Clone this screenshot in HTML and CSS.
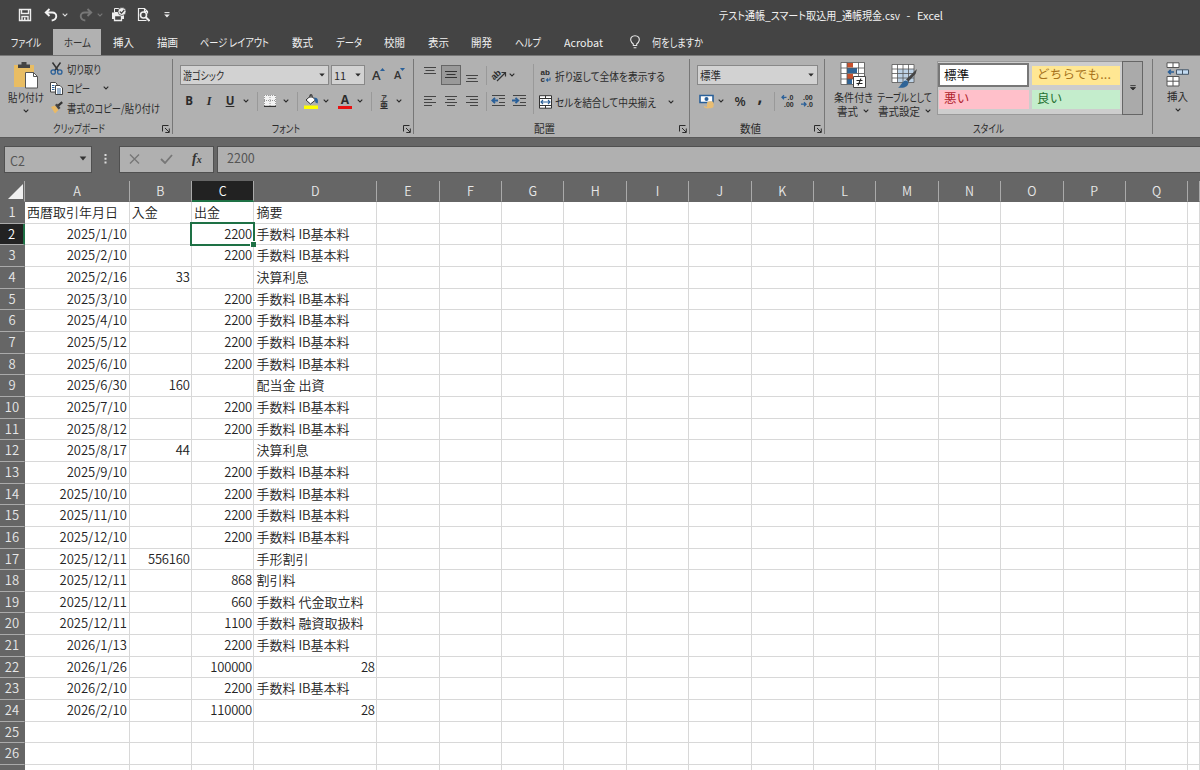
FILE: index.html
```html
<!DOCTYPE html>
<html lang="ja">
<head>
<meta charset="utf-8">
<title>テスト通帳_スマート取込用_通帳現金.csv - Excel</title>
<link rel="stylesheet" href="styles.css">
</head>
<body>
<svg class="defs" width="0" height="0">
  <symbol id="chev" viewBox="0 0 6 4"><path d="M.7.7 3 3 5.3.7" fill="none" stroke="currentColor" stroke-width="1.1"/></symbol>
  <symbol id="tri" viewBox="0 0 6 4"><path d="M.3.4h5.4L3 3.6z" fill="currentColor"/></symbol>
  <symbol id="launch" viewBox="0 0 8 8"><path d="M.5 6.500V.5h6M3 3l4 4M7.300 3.500v4h-4" fill="none" stroke="currentColor"/></symbol>
</svg>

<header class="titlebar">
  <div class="quick">
    <svg width="14" height="14" viewBox="0 0 14 14"><path d="M1.500 1.500h11v11h-11zM3.500 1.500v4h7v-4M4 12.500v-4h6v4" fill="none" stroke="#eee" stroke-width="1.400"/><path d="M6 9.500h1.500v3H6z" fill="#eee"/></svg>
    <svg width="14" height="14" viewBox="0 0 14 14"><path d="M5.500 1 1.800 4.500 5.500 8M2 4.500h6.200c5.500 0 5.500 7.300-.5 8" fill="none" stroke="#f2f2f2" stroke-width="1.900"/></svg>
    <svg class="c1" width="6" height="4"><use href="#chev"/></svg>
    <svg class="dim" width="14" height="14" viewBox="0 0 14 14"><path d="m8.500 1 3.700 3.500L8.500 8M12 4.500H5.800c-5.500 0-5.500 7.300.5 8" fill="none" stroke="currentColor" stroke-width="1.900"/></svg>
    <svg class="c1 dim" width="6" height="4"><use href="#chev"/></svg>
    <svg class="printer" width="16" height="15" viewBox="0 0 16 15"><path d="M1 5.500h12V12H1z" fill="#eee"/><path d="M3.500 8.500h7v5h-7z" fill="#444" stroke="#eee" stroke-width="1.300"/><path d="M3.500 1.500h5v4h-5z" fill="#444" stroke="#eee"/><circle cx="11" cy="4.500" r="4" fill="#eee" stroke="#444" stroke-width=".7"/><path d="m8.800 4.500 1.700 1.700L13.300 3" fill="none" stroke="#444" stroke-width="1.200"/></svg>
    <svg width="13" height="15" viewBox="0 0 13 15"><path d="M9.500 13.500h-8v-12h6l3 3v2M7.500 1.500v3h3" fill="none" stroke="#eee" stroke-width="1.200"/><circle cx="6.500" cy="8" r="3" fill="none" stroke="#eee" stroke-width="1.600"/><path d="m8.500 10 4 4" stroke="#eee" stroke-width="2"/></svg>
    <svg class="more" width="6" height="6" viewBox="0 0 6 6"><path d="M.5.6h5" stroke="#eee"/><path d="M.2 2.600h5.600L3 5.600z" fill="#eee"/></svg>
  </div>
  <div class="doc"><span class="fit" data-w="181">テスト通帳_スマート取込用_通帳現金.csv</span><span>-</span><span class="fit" data-w="26">Excel</span></div>
</header>

<nav class="tabs">
  <a class="tab file"><span class="fit" data-w="30">ファイル</span></a>
  <a class="tab active"><span class="fit" data-w="27">ホーム</span></a>
  <a class="tab"><span class="fit" data-w="21">挿入</span></a>
  <a class="tab"><span class="fit" data-w="21">描画</span></a>
  <a class="tab"><span class="fit" data-w="69">ページ レイアウト</span></a>
  <a class="tab"><span class="fit" data-w="21">数式</span></a>
  <a class="tab"><span class="fit" data-w="26">データ</span></a>
  <a class="tab"><span class="fit" data-w="21">校閲</span></a>
  <a class="tab"><span class="fit" data-w="21">表示</span></a>
  <a class="tab"><span class="fit" data-w="21">開発</span></a>
  <a class="tab"><span class="fit" data-w="26">ヘルプ</span></a>
  <a class="tab"><span class="fit" data-w="39">Acrobat</span></a>
  <a class="tab tell"><svg width="10" height="14" viewBox="0 0 10 14"><path d="M3.300 10.500V9C.3 7 .2 3.800 1.500 2.200 3.200.2 6.800.2 8.500 2.200 9.800 3.800 9.700 7 6.700 9v1.500zM3.600 12.700h2.800" fill="none" stroke="#e6e6e6" stroke-width="1.100"/></svg><span class="fit" data-w="51">何をしますか</span></a>
</nav>

<section class="ribbon">
  <div class="group clipboard">
    <div class="body">
      <div class="big paste">
        <svg width="26" height="27" viewBox="0 0 26 27"><path d="M1 3h20v22H1z" fill="#e9bd63"/><path d="M5 2.500h3.500V0h5v2.500H17V6H5z" fill="#444"/><path d="M12.500 10.500h8l4 4v11.500h-12z" fill="#fff" stroke="#555"/><path d="M20.500 10.500v4h4" fill="none" stroke="#555"/></svg>
        <span class="fit" data-w="36">貼り付け</span>
        <svg width="6" height="4"><use href="#chev"/></svg>
      </div>
      <div class="cliplist">
        <div><svg width="13" height="13" viewBox="0 0 13 13"><path d="m2.500.5 5.700 8M10.500.5l-5.700 8" stroke="#333" stroke-width="1.500"/><circle cx="3.200" cy="10" r="2.200" fill="none" stroke="#2a6099" stroke-width="1.300"/><circle cx="9.800" cy="10" r="2.200" fill="none" stroke="#2a6099" stroke-width="1.300"/></svg><span class="fit" data-w="34">切り取り</span></div>
        <div><svg width="13" height="13" viewBox="0 0 13 13"><path d="M.5.5h5l1.500 1.500v8H.5z" fill="#fff" stroke="#444"/><path d="M2 3.500h2.500M2 5.500h2.500M2 7.500h2.500" stroke="#2a6099"/><path d="M5.500 3.500h4.500l2.500 2.500v6.500h-7z" fill="#fff" stroke="#444"/><path d="M7 7h4M7 9h4M7 11h4" stroke="#2a6099" stroke-width=".9"/></svg><span class="fit" data-w="23">コピー</span><svg class="cc copy" width="6" height="4"><use href="#chev"/></svg></div>
        <div><svg width="13" height="13" viewBox="0 0 13 13"><path d="m1 6 4-1.500 3.500 4.500L5 12.500z" fill="#e9b965"/><path d="m5 4 2-1.500L10.500 7 8.500 8.500z" fill="#444"/><path d="m8.200 4.700 4-3.500" stroke="#333" stroke-width="2.200"/></svg><span class="fit" data-w="93">書式のコピー/貼り付け</span></div>
      </div>
    </div>
    <footer><span class="fit" data-w="52">クリップボード</span><svg width="8" height="8"><use href="#launch"/></svg></footer>
  </div>

  <div class="group font">
    <div class="body rows">
      <div class="line">
        <div class="combo face"><span class="fit" data-w="41">游ゴシック</span><svg width="6" height="4"><use href="#tri"/></svg></div>
        <div class="combo size"><span>11</span><svg width="6" height="4"><use href="#tri"/></svg></div>
        <div class="grow">A<svg width="5" height="3" viewBox="0 0 5 3"><path d="M0 3h5L2.500 0z" fill="#2a6099"/></svg></div>
        <div class="grow small">A<svg width="5" height="3" viewBox="0 0 5 3"><path d="M0 0h5L2.500 3z" fill="#2a6099"/></svg></div>
      </div>
      <div class="strip fontstrip">
        <b>B</b><i>I</i><u>U</u><svg width="6" height="4"><use href="#chev"/></svg>
        <hr>
        <svg width="12" height="12" viewBox="0 0 12 12"><path d="M0 0h12v11H0z" fill="#f4f4f4"/><path d="M0 .5h12M0 5.500h12M.5 0v11M6 0v11M11.500 0v11" stroke="#999" stroke-dasharray="1 1"/><path d="M0 11.400h12" stroke="#333" stroke-width="1.200"/></svg>
        <svg width="6" height="4"><use href="#chev"/></svg>
        <hr>
        <svg width="15" height="15" viewBox="0 0 15 15"><path d="m2 6 5-4.500L11.500 6 6.500 10z" fill="#fff" stroke="#333"/><path d="M6 4V.8h2V4" fill="none" stroke="#333"/><path d="M10 3.500c4 0 4.500 3 3.500 6l-2-1z" fill="#2a6099"/><path d="M0 11.500h14V15H0z" fill="#ff0"/></svg>
        <svg width="6" height="4"><use href="#chev"/></svg>
        <span class="color">A</span>
        <svg width="6" height="4"><use href="#chev"/></svg>
        <hr>
        <span class="ruby"><small>ア</small>亜</span>
        <svg width="6" height="4"><use href="#chev"/></svg>
      </div>
    </div>
    <footer><span class="fit" data-w="28">フォント</span><svg width="8" height="8"><use href="#launch"/></svg></footer>
  </div>

  <div class="group align">
    <div class="body">
      <div class="rows alignleft">
        <div class="strip a1">
          <svg class="up" width="12" height="8" viewBox="0 0 12 8"><path d="M0 .5h12M1.500 3.500h9M0 6.500h12" stroke="#444"/></svg>
          <span class="pressed"><svg width="12" height="8" viewBox="0 0 12 8"><path d="M0 .5h12M1.500 3.500h9M0 6.500h12" stroke="#333"/></svg></span>
          <svg class="down" width="12" height="8" viewBox="0 0 12 8"><path d="M0 .5h12M1.500 3.500h9M0 6.500h12" stroke="#444"/></svg>
          <hr>
          <svg class="open" width="15" height="14" viewBox="0 0 15 14"><text x="-1" y="9" transform="rotate(-42 5 7)" class="ab slant">ab</text><path d="m5 13 8-8M9.500 4.500H13.500V8.500" fill="none" stroke="#333" stroke-width="1.200"/></svg>
          <svg width="6" height="4"><use href="#chev"/></svg>
        </div>
        <div class="strip a2">
          <svg width="12" height="10" viewBox="0 0 12 10"><path d="M0 .5h12M0 3.500h8M0 6.500h12M0 9.500h8" stroke="#444"/></svg>
          <svg width="12" height="10" viewBox="0 0 12 10"><path d="M0 .5h12M2 3.500h8M0 6.500h12M2 9.500h8" stroke="#444"/></svg>
          <svg width="12" height="10" viewBox="0 0 12 10"><path d="M0 .5h12M4 3.500h8M0 6.500h12M4 9.500h8" stroke="#444"/></svg>
          <hr>
          <svg width="15" height="12" viewBox="0 0 15 12"><path d="M1 .5h13M8 3.500h6M8 7.500h6M1 10.500h13" stroke="#444"/><path d="M7 5.500H1.500M4 2.800 1.200 5.500 4 8.200" fill="none" stroke="#2a6099" stroke-width="1.800"/></svg>
          <svg width="15" height="12" viewBox="0 0 15 12"><path d="M1 .5h13M8 3.500h6M8 7.500h6M1 10.500h13" stroke="#444"/><path d="M0 5.500h5.500M3.500 2.800l2.800 2.700-2.800 2.700" fill="none" stroke="#2a6099" stroke-width="1.800"/></svg>
        </div>
      </div>
      <div class="wraps">
        <div><svg class="open" width="13" height="14" viewBox="0 0 13 14"><text x="1.500" y="6.300" class="ab">ab</text><text x="1.500" y="13.300" class="ab">c</text><path d="M11 8.500v2.500H7.500M9 9.500 7.500 11 9 12.500" fill="none" stroke="#2a6099" stroke-width="1.100"/></svg><span class="fit" data-w="110">折り返して全体を表示する</span></div>
        <div><svg width="13" height="14" viewBox="0 0 13 14"><path d="M.5.7h12v12.500H.5z" fill="#fff" stroke="#333"/><path d="M.5 3.500h12M.5 10.500h12M6.500.7v2.800M6.500 10.500v2.700" stroke="#333"/><path d="M2 7h9M4 5 2 7l2 2M9 5l2 2-2 2" fill="none" stroke="#2a6099" stroke-width="1.100"/></svg><span class="fit" data-w="101">セルを結合して中央揃え</span><svg class="cc" width="6" height="4"><use href="#chev"/></svg></div>
      </div>
    </div>
    <footer><span class="fit" data-w="21">配置</span><svg width="8" height="8"><use href="#launch"/></svg></footer>
  </div>

  <div class="group number">
    <div class="body rows">
      <div class="combo general"><span class="fit" data-w="21">標準</span><svg width="6" height="4"><use href="#tri"/></svg></div>
      <div class="strip numstrip">
        <svg width="16" height="15" viewBox="0 0 16 15"><path d="M1 1.500h13v7H1z" fill="#fff" stroke="#2a6099" stroke-width="1.600"/><circle cx="7.500" cy="5" r="2" fill="#2a6099"/><path d="M8 8.500c2-1.500 5-1.500 6.500-.5v5c-2 1.500-4 1.500-6.500.5z" fill="#e8bd74"/><path d="M8 10c2 1 5 1 6.500 0M5 12.500c2 1.500 5 1.500 7 0" fill="none" stroke="#e8bd74" stroke-width="1.500"/></svg>
        <svg width="6" height="4"><use href="#chev"/></svg>
        <span class="pct">%</span><span class="comma">,</span>
        <hr>
        <svg class="open" width="14" height="14" viewBox="0 0 14 14"><text x="6.500" y="6" class="dig">.0</text><text x="3" y="13" class="dig">.00</text><path d="M5.500 3.300H1M3 1.300l-2 2 2 2" fill="none" stroke="#2a6099" stroke-width="1.300"/></svg>
        <svg class="open" width="14" height="14" viewBox="0 0 14 14"><text x="2" y="6" class="dig">.00</text><text x="6" y="13" class="dig">.0</text><path d="M0 10.200h4.500M3 8.200l2 2-2 2" fill="none" stroke="#2a6099" stroke-width="1.300"/></svg>
      </div>
    </div>
    <footer><span class="fit" data-w="21">数値</span><svg width="8" height="8"><use href="#launch"/></svg></footer>
  </div>

  <div class="group styles">
    <div class="body">
      <div class="big cond">
        <svg width="27" height="27" viewBox="0 0 27 27"><path d="M1 .5h23v22H1z" fill="#fff"/><path d="M7 1h6v4.500H7zM7 12h6v5H7z" fill="#c8502c"/><path d="M7 6h10v5H7zM7 17h5v5H7z" fill="#2f6497"/><path d="M1 .5h23.500v22H1zM1 6h23M1 11.500h23M1 17h23M7 .5v22M18.500.5v22" fill="none" stroke="#555" stroke-width=".8"/><path d="M13.500 14.500h12v11h-12z" fill="#fff" stroke="#444"/><path d="M16.500 18.500h6M16.500 21.500h6M21 16.500l-3 7" stroke="#222" stroke-width="1.100"/></svg>
        <span class="fit" data-w="39">条件付き</span>
        <div class="under"><span class="fit" data-w="21">書式</span><svg width="6" height="4"><use href="#chev"/></svg></div>
      </div>
      <div class="big tablefmt">
        <svg width="27" height="27" viewBox="0 0 27 27"><path d="M1 2.500h22v18H1z" fill="#fff"/><path d="M6.500 7H23v13.500H6.500z" fill="#bdd2e6"/><path d="M1 2.500h22v18H1zM1 7h22M1 11.500h22M1 16h22M6.500 2.500v18M12 2.500v18M17.500 2.500v18" fill="none" stroke="#555" stroke-width=".8"/><path d="m26 7-1.500 5-7 7.500-2.500-2z" fill="#444"/><path d="M14.500 18.500c3 0 4 3 1.500 5.500-2.500 2-6 2-9 1.500 3-1 3.500-6 7.500-7z" fill="#2f6497"/></svg>
        <span class="fit" data-w="55">テーブルとして</span>
        <div class="under"><span class="fit" data-w="42">書式設定</span><svg width="6" height="4"><use href="#chev"/></svg></div>
      </div>
      <div class="gallery">
        <div class="swatches">
          <span class="sw normal">標準</span><span class="sw neutral">どちらでも...</span>
          <span class="sw bad">悪い</span><span class="sw good">良い</span>
        </div>
        <div class="expand"><svg width="6" height="6" viewBox="0 0 6 6"><path d="M.3.6h5.400M.5 2.600 3 5l2.500-2.400z" fill="#333" stroke="#333" stroke-width=".9"/></svg></div>
      </div>
    </div>
    <footer><span class="fit" data-w="31">スタイル</span></footer>
  </div>

  <div class="group cells">
    <div class="body">
      <div class="big insert">
        <svg width="24" height="26" viewBox="0 0 24 26"><path d="M1 .8h12v4.700H1zM1 14.500h12v9.500H1zM7 .8v4.700M7 14.500V24M1 19.200h12" fill="#fff" stroke="#555"/><path d="M10.500 7.800h12v4.500h-12zM16.500 7.800v4.500" fill="#c3dbf2" stroke="#456"/><path d="M8 10H2.500M4.800 7.700 2.500 10l2.300 2.300" fill="none" stroke="#2a6099" stroke-width="1.600"/></svg>
        <span class="fit" data-w="21">挿入</span>
        <svg width="6" height="4"><use href="#chev"/></svg>
      </div>
    </div>
  </div>
</section>

<section class="formula">
  <div class="box name"><span>C2</span><svg width="8" height="5" viewBox="0 0 6 4"><use href="#tri"/></svg></div>
  <svg class="dots" width="3" height="11" viewBox="0 0 3 11"><path d="M.5 1h2v2h-2zM.5 4.700h2v2h-2zM.5 8.400h2v2h-2z" fill="#ddd"/></svg>
  <div class="box fx">
    <svg width="11" height="10" viewBox="0 0 11 10"><path d="m1 .5 9 9M10 .5l-9 9" stroke="#777" stroke-width="1.400"/></svg>
    <svg width="13" height="10" viewBox="0 0 13 10"><path d="m1 5 4 4L12 1" fill="none" stroke="#777" stroke-width="1.800"/></svg>
    <span class="fxt">f<small>x</small></span>
  </div>
  <div class="box value">2200</div>
</section>

<main class="sheet" id="sheet"></main>
<script src="sheet.js"></script>
</body>
</html>
```
FILE: styles.css
```css
* { box-sizing: border-box; }
body {
  margin: 0;
  width: 1200px;
  height: 770px;
  overflow: hidden;
  background: #666;
  font: 11px/14px "Noto Sans CJK JP", sans-serif;
  color: #2b2b2b;
}
svg { display: block; flex: none; }
.open { overflow: visible; }
.defs { position: absolute; }
.fit {
  display: inline-block;
  white-space: nowrap;
  transform-origin: 0 50%;
  font-feature-settings: "palt";
}

.titlebar { display: flex; height: 29px; background: #444; color: #f2f2f2; }
.quick { display: flex; align-items: center; width: 719px; padding-left: 18px; }
.quick svg + svg { margin-left: 12px; }
.quick svg.c1 { margin-left: 4px; color: #ddd; }
.quick svg.c1 + svg { margin-left: 11px; }
.quick .dim, .quick svg.c1.dim { color: #777; }
.quick svg.c1 + svg.printer { margin: 0 -2px 0 8px; }
.quick svg.more { margin-left: 14px; }
.doc { display: flex; gap: 6.500px; padding-top: 8px; white-space: pre; }

.tabs { display: flex; height: 26px; background: #444; color: #f0f0f0; }
.tab { display: flex; align-items: center; padding: 0 11.300px; }
.tab.active { background: #b1b1b1; color: #333; padding: 0 10.500px; margin: 0 .7px; }
.tab.tell { gap: 12px; padding-left: 16px; }

.ribbon {
  display: flex;
  height: 83px;
  padding: 3px 0;
  background: #b1b1b1;
  border-top: 1px solid #777;
  border-bottom: 1px solid #595959;
}
.group { display: flex; flex: none; flex-direction: column; border-right: 1px solid #777; }
.group.cells { border: 0; width: 47px; }
.clipboard { width: 173px; }
.font { width: 241px; }
.align { width: 276px; }
.number { width: 135px; }
.styles { width: 328px; }
.body { display: flex; flex: none; height: 61px; }
.group footer { display: flex; flex: none; align-items: center; height: 14px; padding: 2px 14px 0 0; justify-content: center; }
.group footer svg { width: 8px; margin: 2px -12px 0 auto; }
.group footer .fit { flex: none; margin: 0 4px 0 auto; }
.group.styles footer { padding-right: 0; }
.group.styles footer .fit { margin: 0; }

.big { display: flex; flex-direction: column; align-items: center; padding-top: 3px; }
.big > svg:last-child { margin-top: 5px; }
.big > .fit { margin-top: 1px; }
.under { display: flex; align-items: center; gap: 5px; margin-top: -.5px; }
.paste { width: 47px; padding-left: 5px; }
.cliplist { display: grid; grid-template-rows: repeat(3, 19.500px); padding-left: 3px; }
.cliplist div { display: flex; align-items: center; gap: 4px; }
.cc { margin-left: 9px; }

.rows { display: flex; flex-direction: column; gap: 6px; padding-top: 6px; }
.line { display: flex; padding-left: 7px; }
.combo {
  display: flex;
  align-items: center;
  justify-content: space-between;
  height: 20px;
  padding: 0 3px 0 2px;
  background: #d2d2d2;
  border: 1px solid #888;
}
.face { width: 149px; }
.size { width: 34px; margin-left: 2px; }
.grow { display: flex; width: 14px; margin-left: 7px; font: 600 13px/20px "Open Sans", sans-serif; color: #333; }
.grow svg { margin: 3px 0 0 -1px; }
.grow.small { font-size: 11px; margin-left: 8px; }
.strip { display: grid; align-items: center; justify-items: center; height: 20px; }
.strip hr { width: 1px; height: 19px; margin: 0; border: 0; background: #999; }
.fontstrip {
  grid-template-columns: 16px 24px 18px 14px 8px 18px 14px 8px 20px 10px 28px 2px 20px 6px 24px;
  padding-left: 8px;
}
.fontstrip b { font: 700 11.500px/16px "Open Sans", sans-serif; }
.fontstrip i { font: italic 700 12px/16px "Liberation Serif", serif; }
.fontstrip u { font: 700 11.500px/16px "Open Sans", sans-serif; text-underline-offset: 1px; }
.color { width: 14px; height: 15px; border-bottom: 3px solid #e81010; font: 700 12px/12px "Open Sans", sans-serif; text-align: center; }
.ruby { display: flex; flex-direction: column; align-items: center; width: 8px; font-size: 8px; line-height: 8px; font-weight: 700; }
.ruby small { font-size: 6px; line-height: 7px; }

.alignleft { width: 118px; padding-left: 6px; }
.a1 { grid-template-columns: 20px 22px 20px 8px 18px 8px; justify-content: start; }
.a2 { grid-template-columns: 20px 22px 20px 8px 17px 25px; justify-content: start; }
.up { margin-bottom: 8px; }
.down { margin-top: 7px; }
.pressed { display: flex; align-items: center; justify-content: center; width: 20px; height: 20px; background: #999; border: 1px solid #666; }
.wraps { display: grid; grid-template-rows: 26px 26px; padding-left: 5px; margin: 5px 0 0 1px; border-left: 1px solid #999; height: 50px; align-content: center; }
.wraps div { display: flex; align-items: center; gap: 3px; }
.ab { font: 700 8px "Liberation Sans", sans-serif; fill: #2b2b2b; }
.ab.slant { font-size: 9px; }
.dig { font: 700 7px "Liberation Sans", sans-serif; fill: #2b2b2b; }

.number .body { padding-left: 7px; }
.general { width: 121px; }
.numstrip { grid-template-columns: 20px 8px 30px 10px 18px 10px 30px; }
.pct { font: 600 13px/16px "Open Sans", sans-serif; }
.comma { font: 700 17px/10px "Open Sans", sans-serif; margin-top: -9px; }

.cond { width: 50px; padding-left: 6px; }
.tablefmt { width: 56px; margin-left: 1px; }
.gallery { display: flex; width: 206px; height: 54px; margin: 2px 0 0 5px; background: #cdcdcd; border: 1px solid #999; }
.swatches { display: grid; grid-template-columns: 91px 88px; grid-template-rows: 24px 19px; gap: 3px 3px; padding-top: 1px; align-items: center; }
.sw { height: 19px; padding-left: 5px; font-size: 12.500px; line-height: 16px; letter-spacing: .2px; }
.normal { height: 24px; padding-left: 4px; line-height: 19px; background: #fff; border: 2px solid #777; color: #111; }
.neutral { background: #ffe793; color: #a8741c; }
.bad { background: #ffc0ca; color: #b01c2c; margin-left: 1px; }
.good { background: #c4edcc; color: #1f7030; }
.expand { display: flex; align-items: center; justify-content: center; width: 21px; margin: -1px -1px -1px auto; background: #aaa; border: 1px solid #666; }
.insert { width: 47px; padding-left: 2px; }

.formula { display: flex; height: 43px; padding: 8px 0 8px 4px; }
.box { display: flex; align-items: center; height: 27px; background: #b0b0b0; border: 1px solid #505050; color: #555; font-size: 12.500px; }
.name { width: 88px; justify-content: space-between; padding: 2px 4px 0 5px; }
.name svg { margin-top: -5px; color: #333; }
.dots { margin: 7px 12px 0 12px; }
.fx { width: 95px; padding-left: 9px; }
.fx svg { margin-top: -2px; }
.fx svg + svg { margin-left: 20px; }
.fxt { margin-left: 19px; font: italic 700 14px/16px "Liberation Serif", serif; color: #333; }
.fxt small { font-size: 10px; }
.value { flex: 1; margin-left: 3px; padding-left: 9px; border-right: 0; padding-bottom: 3px; }

.sheet { display: block; font-size: 13px; font-weight: 350; color: #222; }
.row {
  display: grid;
  grid-template-rows: 100%;
  grid-template-columns: 25px 104.800px 62.300px 62.400px 122.800px repeat(13, 62.400px) 12px;
  width: 1201px;
  height: 21.660px;
  background: #fff;
}
.cell {
  padding: 0 2px 0 2px;
  border-right: 1px solid #d8d8d8;
  border-bottom: 1px solid #d8d8d8;
  line-height: 20.500px;
  white-space: pre;
}
.num { text-align: right; }
.amount { letter-spacing: -.2px; padding-right: 1.500px; }
.rh { padding: 0; text-align: center; background: #666; color: #e8e8e8; border-color: #aaa; border-right-color: #666; }
.rh.sel { background: #222; color: #fff; border-right: 2px solid #1e7145; }
.picked { position: relative; }
.picked::before { content: ""; position: absolute; inset: -2px -1.500px -1.500px -2px; border: 2px solid #1e7145; }
.picked::after { content: ""; position: absolute; right: -3px; bottom: -3px; width: 5px; height: 5px; background: #1e7145; border: solid #fff; border-width: 1px 0 0 1px; }
.head { height: 21px; background: #666; }
.head .cell { padding: 0; text-align: center; line-height: 19.500px; color: #e8e8e8; border-right-color: #aaa; border-bottom-color: #666; font-size: 12.500px; }
.head .cell.sel { background: #222; color: #fff; border-bottom: 2px solid #1e7145; }
.head .cell.corner { display: flex; align-items: flex-end; justify-content: flex-end; padding-bottom: 2px; }
```
FILE: sheet.js
```js
const fee = '手数料 IB基本料';
const rows = [
  ['西暦取引年月日', '入金', '出金', '摘要'],
  ['2025/1/10', '', 2200, fee],
  ['2025/2/10', '', 2200, fee],
  ['2025/2/16', 33, '', '決算利息'],
  ['2025/3/10', '', 2200, fee],
  ['2025/4/10', '', 2200, fee],
  ['2025/5/12', '', 2200, fee],
  ['2025/6/10', '', 2200, fee],
  ['2025/6/30', 160, '', '配当金 出資'],
  ['2025/7/10', '', 2200, fee],
  ['2025/8/12', '', 2200, fee],
  ['2025/8/17', 44, '', '決算利息'],
  ['2025/9/10', '', 2200, fee],
  ['2025/10/10', '', 2200, fee],
  ['2025/11/10', '', 2200, fee],
  ['2025/12/10', '', 2200, fee],
  ['2025/12/11', 556160, '', '手形割引'],
  ['2025/12/11', '', 868, '割引料'],
  ['2025/12/11', '', 660, '手数料 代金取立料'],
  ['2025/12/11', '', 1100, '手数料 融資取扱料'],
  ['2026/1/13', '', 2200, fee],
  ['2026/1/26', '', 100000, 28],
  ['2026/2/10', '', 2200, fee],
  ['2026/2/10', '', 110000, 28],
  [], [], []
];
const lastNumbered = 26;
const letters = 'ABCDEFGHIJKLMNOPQ'.split('');
const sheet = document.getElementById('sheet');

function cell(text, cls) {
  return `<div class="cell ${cls}">${text}</div>`;
}

const corner = '<svg width="16" height="15" viewBox="0 0 16 15"><path d="M15 0v15H0z" fill="#f0f0f0"/></svg>';
let html = '<div class="row head">' + cell(corner, 'corner') +
  letters.map(l => cell(l, l === 'C' ? 'sel' : '')).join('') + cell('', '') + '</div>';

rows.forEach((row, r) => {
  html += '<div class="row">' + cell(r < lastNumbered ? r + 1 : '', r === 1 ? 'rh sel' : 'rh');
  for (let c = 0; c < 18; c++) {
    const v = row[c] ?? '';
    const kind = typeof v === 'number' ? 'num amount' : /^\d/.test(v) ? 'num' : '';
    html += cell(v, kind + (r === 1 && c === 2 ? ' picked' : ''));
  }
  html += '</div>';
});
sheet.innerHTML = html;

// Condense each label to its allotted width, keeping it in the flow.
document.querySelectorAll('.fit').forEach(el => {
  const natural = el.getBoundingClientRect().width;
  const target = Number(el.dataset.w);
  el.style.transform = `scaleX(${target / natural})`;
  el.style.width = `${target}px`;
});
```
